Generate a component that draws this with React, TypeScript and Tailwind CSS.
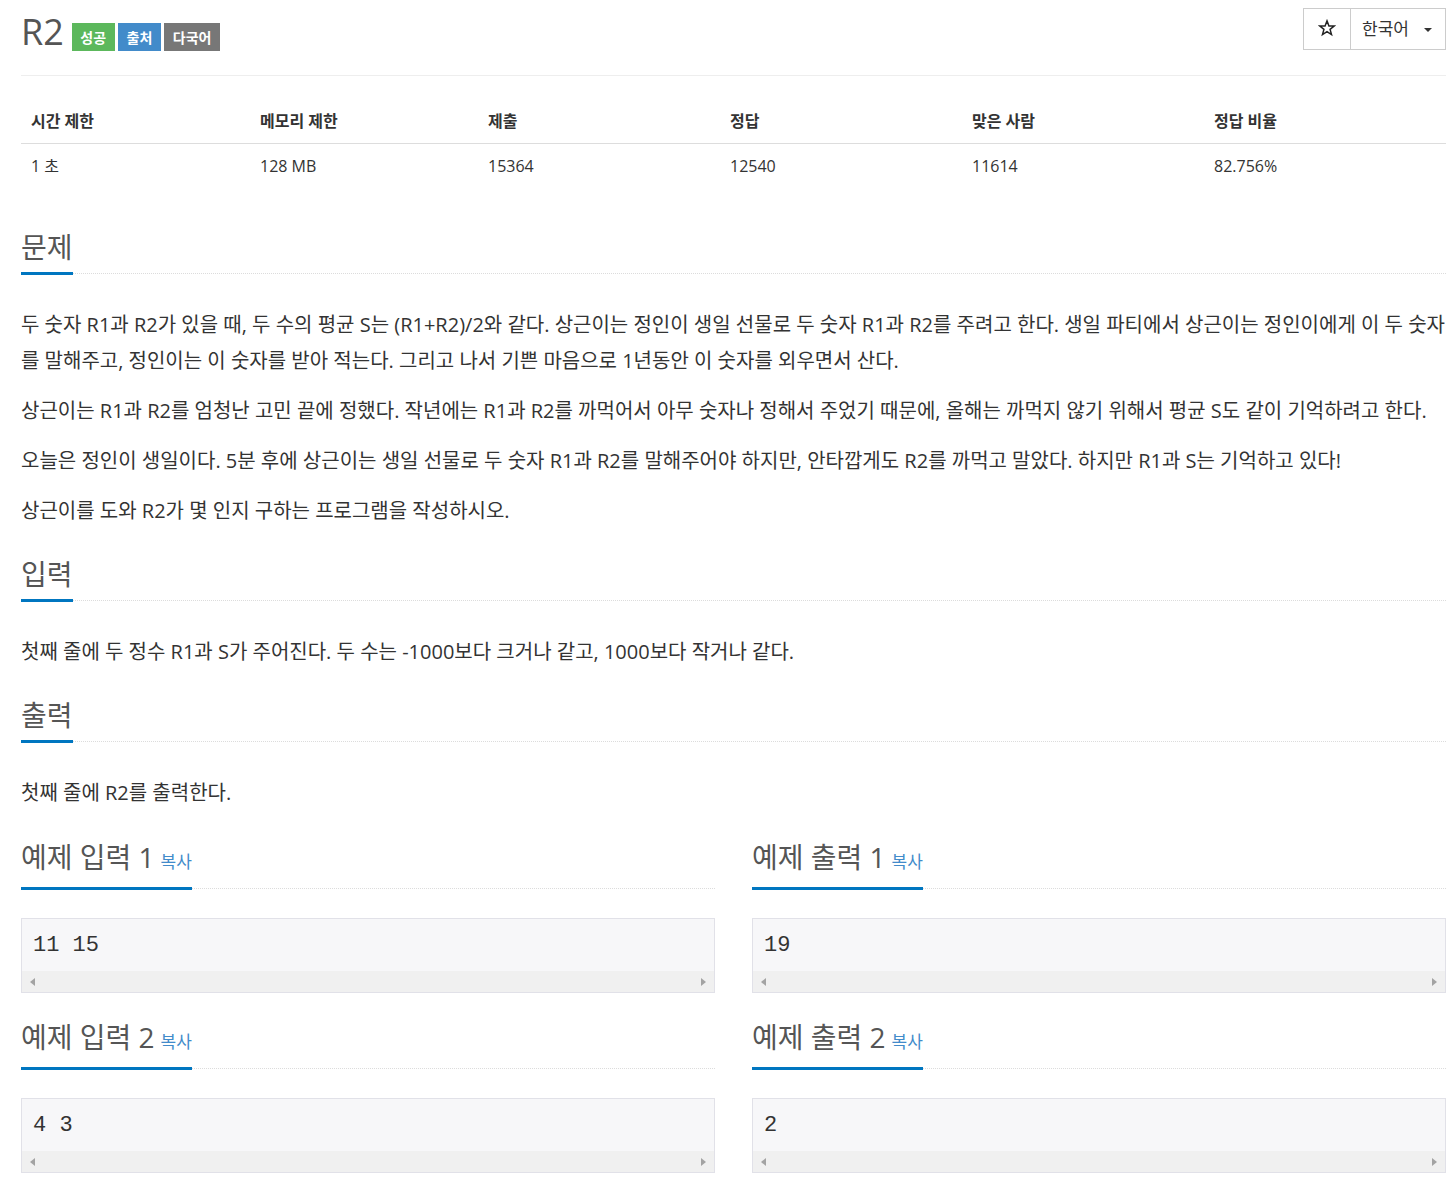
import React from "react";

const font = { fontFamily: '"Open Sans", "Noto Sans CJK KR", sans-serif' };

const Headline = ({ children }: { children: React.ReactNode }) => (
	<div className="flex border-b border-dotted border-[#dcdcdc]">
		<h2 className="-mb-[2px] flex items-baseline border-b-[3px] border-[#0076c0] pb-[7px] text-[28px] leading-[36px] font-normal text-[#555]">
			{children}
		</h2>
	</div>
);

const Copy = () => (
	<span className="ml-[6px] text-[17px] text-[#428bca]">복사</span>
);

const SampleBox = ({ text }: { text: string }) => (
	<div className="mt-[29px] border border-[#e1e1e8] bg-[#f7f7f9]">
		<pre
			className="flex h-[52px] items-center px-[11px] text-[22px] text-[#333]"
			style={{ fontFamily: '"Liberation Mono", monospace' }}
		>
			{text}
		</pre>
		<div className="flex h-[21px] items-center justify-between bg-[#f0f0f0] px-[8px]">
			<span className="h-0 w-0 border-y-[4px] border-r-[5px] border-y-transparent border-r-[#a3a3a3]" />
			<span className="h-0 w-0 border-y-[4px] border-l-[5px] border-y-transparent border-l-[#a3a3a3]" />
		</div>
	</div>
);

const Sample = ({ title, text, first }: { title: string; text: string; first?: boolean }) => (
	<div className={first ? "mt-[28px]" : "mt-[26px]"}>
		<Headline>
			{title}
			<Copy />
		</Headline>
		<SampleBox text={text} />
	</div>
);

const stats = [
	["시간 제한", "1 초"],
	["메모리 제한", "128 MB"],
	["제출", "15364"],
	["정답", "12540"],
	["맞은 사람", "11614"],
	["정답 비율", "82.756%"],
];

const widths = [229, 228, 242, 242, 242, 242];

export default function App() {
	return (
		<div className="min-h-screen bg-white pl-[21px] pr-[10px] text-[#333]" style={font}>
			<div className="flex items-start justify-between pt-[8px]">
				<div className="mt-[4px] flex items-end">
					<h1 className="text-[36px] leading-[40px] font-normal text-[#555]">R2</h1>
					<div className="mb-[1px] ml-[8px] flex gap-[3.5px] text-[14px] font-bold text-white">
						<span className="flex h-[28px] items-center bg-[#5cb85c] px-[8.5px]">성공</span>
						<span className="flex h-[28px] items-center bg-[#428bca] px-[8.5px]">출처</span>
						<span className="flex h-[28px] items-center bg-[#777] px-[8.5px]">다국어</span>
					</div>
				</div>
				<div className="flex h-[42px] border border-[#ccc] text-[17px]">
					<div className="flex w-[47px] items-center justify-center border-r border-[#ccc]">
						<svg width="18" height="18" viewBox="0 0 24 24" className="-mt-[2px]">
							<polygon
								points="12,2.5 14.6,9.2 21.6,9.4 16.1,13.8 18,20.8 12,16.8 6,20.8 7.9,13.8 2.4,9.4 9.4,9.2"
								fill="none"
								stroke="#222"
								strokeWidth="2"
								strokeLinejoin="miter"
							/>
						</svg>
					</div>
					<div className="flex w-[94px] items-center pl-[11px]">
						한국어
						<span className="ml-[15px] mt-[2px] h-0 w-0 border-x-[4px] border-t-[4px] border-x-transparent border-t-[#333]" />
					</div>
				</div>
			</div>
			<hr className="mt-[23px] border-t border-[#eee]" />

			<table className="mt-[23px] w-full table-fixed text-[16px]">
				<colgroup>
					{widths.map((w, i) => (
						<col key={i} style={{ width: w }} />
					))}
				</colgroup>
				<thead>
					<tr className="border-b border-[#ddd]">
						{stats.map(([h]) => (
							<th key={h} className="px-[10px] py-[12px] text-left leading-[20px] font-bold">
								{h}
							</th>
						))}
					</tr>
				</thead>
				<tbody>
					<tr>
						{stats.map(([h, v]) => (
							<td key={h} className="px-[10px] py-[12px] leading-[20px]">
								{v}
							</td>
						))}
					</tr>
				</tbody>
			</table>

			<div className="mt-[41px]">
				<Headline>문제</Headline>
				<div className="mt-[33px] flex flex-col gap-[14px] text-[20px] leading-[36px]">
					<p>
						두 숫자 R1과 R2가 있을 때, 두 수의 평균 S는 (R1+R2)/2와 같다. 상근이는 정인이 생일 선물로 두 숫자 R1과 R2를 주려고 한다. 생일 파티에서 상근이는 정인이에게 이 두 숫자를 말해주고, 정인이는 이 숫자를 받아 적는다. 그리고 나서 기쁜 마음으로 1년동안 이 숫자를 외우면서 산다.
					</p>
					<p>
						상근이는 R1과 R2를 엄청난 고민 끝에 정했다. 작년에는 R1과 R2를 까먹어서 아무 숫자나 정해서 주었기 때문에, 올해는 까먹지 않기 위해서 평균 S도 같이 기억하려고 한다.
					</p>
					<p>
						오늘은 정인이 생일이다. 5분 후에 상근이는 생일 선물로 두 숫자 R1과 R2를 말해주어야 하지만, 안타깝게도 R2를 까먹고 말았다. 하지만 R1과 S는 기억하고 있다!
					</p>
					<p>상근이를 도와 R2가 몇 인지 구하는 프로그램을 작성하시오.</p>
				</div>
			</div>

			<div className="mt-[27px]">
				<Headline>입력</Headline>
				<p className="mt-[33px] text-[20px] leading-[36px]">
					첫째 줄에 두 정수 R1과 S가 주어진다. 두 수는 -1000보다 크거나 같고, 1000보다 작거나 같다.
				</p>
			</div>

			<div className="mt-[27px]">
				<Headline>출력</Headline>
				<p className="mt-[33px] text-[20px] leading-[36px]">첫째 줄에 R2를 출력한다.</p>
			</div>

			<div className="grid grid-cols-2 gap-x-[37px]">
				<Sample first title="예제 입력 1" text="11 15" />
				<Sample first title="예제 출력 1" text="19" />
				<Sample title="예제 입력 2" text="4 3" />
				<Sample title="예제 출력 2" text="2" />
			</div>
		</div>
	);
}
